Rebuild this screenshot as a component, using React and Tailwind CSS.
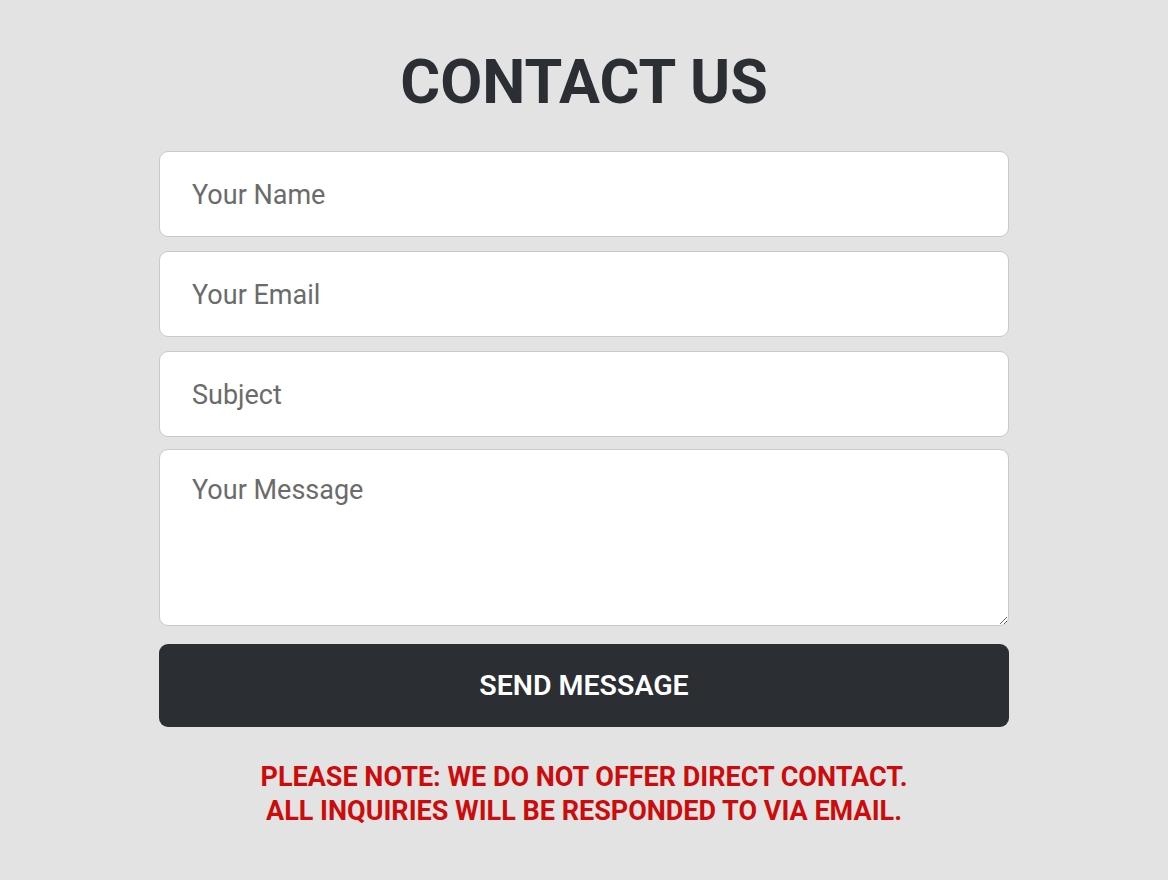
export default function App() {
  const field =
    "w-full rounded-[9px] border-[1.5px] border-[#c9c9c9] bg-white px-[32px] text-[27px] text-[#333] outline-none placeholder:text-[#6b6b6b]";

  return (
    <div className="min-h-screen bg-[#e3e3e3] font-['Roboto',sans-serif]">
      <div className="mx-auto w-[850px] pt-[44px]">
        <h1 className="text-center text-[61px] font-bold leading-[76px] text-[#2b2e33]">
          CONTACT US
        </h1>
        <form className="mt-[31px] flex flex-col" onSubmit={(e) => e.preventDefault()}>
          <input className={`${field} h-[86px] pt-[2px]`} placeholder="Your Name" />
          <input className={`${field} mt-[14px] h-[86px] pt-[2px]`} placeholder="Your Email" />
          <input className={`${field} mt-[14px] h-[86px] pt-[2px]`} placeholder="Subject" />
          <textarea
            className={`${field} mt-[12px] h-[177px] resize-y pt-[24px] leading-[32px]`}
            placeholder="Your Message"
          />
          <button
            type="submit"
            className="mt-[18px] h-[83px] w-full rounded-[9px] bg-[#2b2e33] pt-[2px] text-[28.5px] font-semibold text-white"
          >
            SEND MESSAGE
          </button>
        </form>
        <p className="mt-[33px] text-center text-[27px] font-bold leading-[34px] text-[#cc0c0c]">
          PLEASE NOTE: WE DO NOT OFFER DIRECT CONTACT.
          <br />
          ALL INQUIRIES WILL BE RESPONDED TO VIA EMAIL.
        </p>
      </div>
    </div>
  );
}
